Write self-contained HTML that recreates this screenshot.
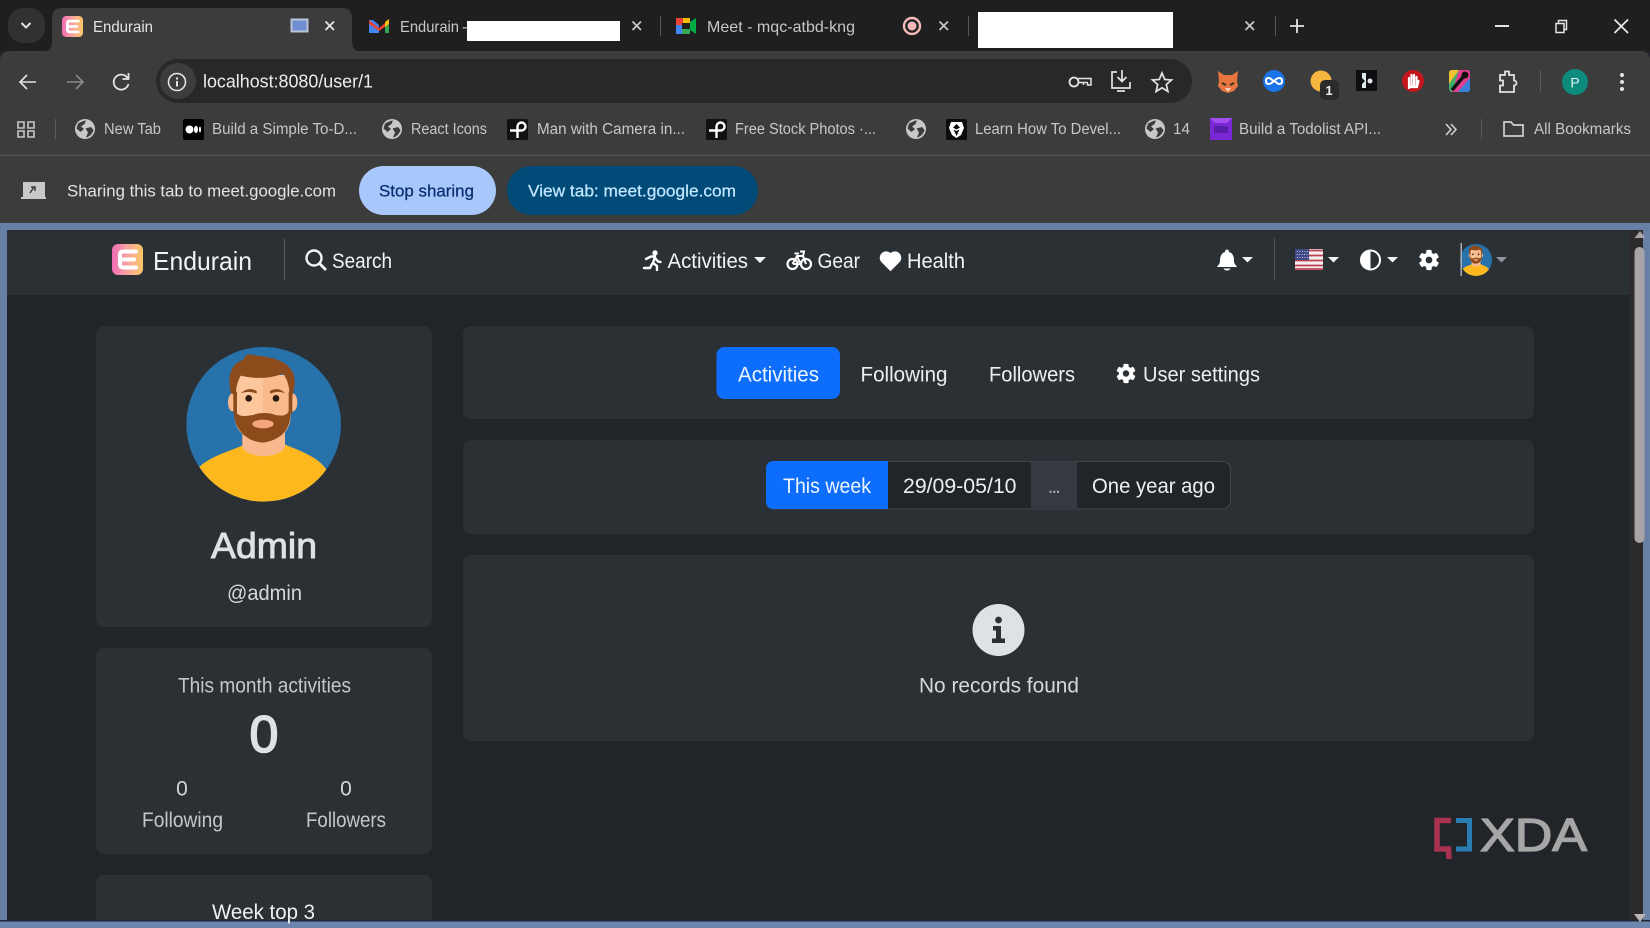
<!DOCTYPE html>
<html lang="en"><head><meta charset="utf-8"><title>Endurain</title>
<style>
html,body{margin:0;padding:0;width:1650px;height:928px;overflow:hidden;background:#212529}
svg{display:block}
text{font-family:"Liberation Sans",sans-serif}
</style></head><body>
<svg width="1650" height="928" viewBox="0 0 1650 928" xmlns="http://www.w3.org/2000/svg">
<defs>
<linearGradient id="eg" x1="0" y1="0" x2="1" y2="0"><stop offset="0" stop-color="#f06cb4"/><stop offset=".5" stop-color="#f8a5a0"/><stop offset="1" stop-color="#fdc665"/></linearGradient>
<symbol id="logo" viewBox="0 0 31 31"><rect width="31" height="31" rx="6" fill="url(#eg)"/><path d="M24 7.500H11.500Q8 7.500 8 11V20Q8 23.500 11.500 23.500H24M9 15.500H22" fill="none" stroke="#fff" stroke-width="4" stroke-linecap="round"/></symbol>
<symbol id="globe" viewBox="0 0 20 20"><circle cx="10" cy="10" r="10" fill="#c8c8c8"/><path d="M3 4.500C6 3 9 1.500 11 1.500L9.500 5L6 7.500L9 10L5.500 13L1.500 9.500ZM16 8L10.500 9.500L13 13.500L11 18.500C14 18 17.500 15 18.500 11Z" fill="#3c3c3c"/></symbol>
<symbol id="pexels" viewBox="0 0 21 21"><rect width="21" height="21" rx="2" fill="#111"/><path d="M3 11.500H14.500A4 4 0 1 0 10.500 7.500V19" fill="none" stroke="#fff" stroke-width="2.400"/></symbol>
<symbol id="gear" viewBox="-12 -12 24 24"><g fill="currentColor"><rect x="-3" y="-11" width="6" height="22" rx="1.500"/><rect x="-3" y="-11" width="6" height="22" rx="1.500" transform="rotate(60)"/><rect x="-3" y="-11" width="6" height="22" rx="1.500" transform="rotate(120)"/><circle r="8.200"/></g><circle r="3.700" fill="#2b3035"/></symbol>
<clipPath id="avclip"><circle cx="791" cy="598" r="232"/></clipPath>
<g id="avatar">
<circle cx="791" cy="598" r="232" fill="#2872ac"/>
<g clip-path="url(#avclip)">
<path d="M596 728C625 695 700 675 742 655H848C890 675 955 692 982 738V840H596Z" fill="#fdb81e"/>
<path d="M727 610V668C750 702 832 702 855 668V610Z" fill="#f9b88e"/>
<ellipse cx="698" cy="532" rx="14" ry="27" fill="#f9b88e"/><ellipse cx="878" cy="532" rx="14" ry="27" fill="#f9b88e"/>
<path d="M704 450H872V570C872 620 840 645 788 645C736 645 704 620 704 570Z" fill="#fcc79d"/>
<path d="M788 450H872V570C872 620 840 645 788 645Z" fill="#f9bb8d"/>
<path d="M693 505C680 450 695 415 730 405C735 390 745 385 760 390C800 395 860 400 880 445C888 470 882 490 878 510L868 505C868 480 860 462 850 445C810 462 760 462 722 452C712 470 708 490 707 510Z" fill="#8d4a1a"/>
<path d="M700 500H711V565H700ZM866 500H877V565H866Z" fill="#8d4a1a"/>
<path d="M703 550C712 582 740 572 760 570C775 562 810 562 825 570C845 572 862 578 871 548C876 595 860 642 790 653C730 650 696 600 703 550Z" fill="#8d4a1a"/>
<ellipse cx="789" cy="597" rx="32" ry="13" fill="#f4a77e"/>
<path d="M722 505Q745 484 770 498V506Q745 496 722 505ZM810 498Q835 484 856 505Q835 496 810 506Z" fill="#8d4a1a"/>
<circle cx="746" cy="520" r="10" fill="#2c1a10"/><circle cx="828" cy="520" r="10" fill="#2c1a10"/>
</g></g>
</defs>

<!-- tab strip -->
<rect width="1650" height="52" fill="#1f1f1f"/>
<rect x="8" y="8" width="37" height="35" rx="15" fill="#303133"/>
<path d="M21.500 23L26 27.500L30.500 23" fill="none" stroke="#e3e3e3" stroke-width="2"/>
<path d="M42 52Q52 52 52 41V18Q52 8 62 8H342Q352 8 352 18V41Q352 52 362 52Z" fill="#3c3c3c"/>
<use href="#logo" x="62" y="16" width="21" height="21"/>
<text x="93" y="32" font-size="16" fill="#e3e3e3" textLength="60" lengthAdjust="spacingAndGlyphs">Endurain</text>
<rect x="291.500" y="19.500" width="16" height="12" fill="#6f8fd0" stroke="#b9c4d8" stroke-width="2"/>
<path d="M325.500 21.500L334 30M334 21.500L325.500 30" stroke="#e8e8e8" stroke-width="1.800"/>
<!-- gmail -->
<path d="M369 33V20L373 20L379 25V33" fill="#4285f4"/><path d="M385 33V22L389 20V33Z" fill="#34a853"/><path d="M369 20L379 28L389 20V24L379 31L369 24Z" fill="#ea4335"/><path d="M385 22L389 19V24L385 27Z" fill="#fbbc04"/>
<text x="400" y="32" font-size="16" fill="#c7c7c7" textLength="59" lengthAdjust="spacingAndGlyphs">Endurain</text>
<text x="462" y="32" font-size="16" fill="#c7c7c7">-</text>
<rect x="467" y="21" width="153" height="20" fill="#fff"/>
<path d="M632.500 21.500L641 30M641 21.500L632.500 30" stroke="#c7c7c7" stroke-width="1.800"/>
<rect x="660" y="16" width="1" height="20" fill="#555"/>
<!-- meet -->
<rect x="676" y="18" width="7" height="7" fill="#ea4335"/><rect x="683" y="18" width="7" height="5" fill="#fbbc04"/><rect x="676" y="25" width="6" height="9" fill="#4285f4"/><rect x="682" y="29" width="8" height="5" fill="#34a853"/><path d="M690 22L696 18V34L690 30Z" fill="#00ac47"/><rect x="682" y="23" width="7" height="6" fill="#1f1f1f"/>
<text x="707" y="32" font-size="16" fill="#c7c7c7" textLength="148" lengthAdjust="spacingAndGlyphs">Meet - mqc-atbd-kng</text>
<circle cx="912" cy="26" r="8" fill="#1f1f1f" stroke="#f2b8b5" stroke-width="2.400"/><circle cx="912" cy="26" r="4.500" fill="#f2b8b5"/>
<path d="M939.500 21.500L948 30M948 21.500L939.500 30" stroke="#c7c7c7" stroke-width="1.800"/>
<rect x="968" y="16" width="1" height="20" fill="#555"/>
<rect x="978" y="12" width="195" height="36" fill="#fff"/>
<path d="M1245.500 21.500L1254 30M1254 21.500L1245.500 30" stroke="#c7c7c7" stroke-width="1.800"/>
<rect x="1275" y="16" width="1" height="20" fill="#555"/>
<path d="M1290 26H1304M1297 19V33" stroke="#e3e3e3" stroke-width="1.800"/>
<rect x="1495" y="25" width="14" height="2" fill="#e3e3e3"/>
<path d="M1556 23.500H1564V32.500H1556ZM1558.500 23.500V20.500H1566.500V29.500H1564" fill="none" stroke="#e3e3e3" stroke-width="1.500"/>
<path d="M1614.500 19.500L1628 33M1628 19.500L1614.500 33" stroke="#e8e8e8" stroke-width="1.800"/>

<!-- toolbar and infobar -->
<path d="M0 223V61Q0 51 10 51H1640Q1650 51 1650 61V223Z" fill="#3c3c3c"/>
<path d="M36 82H20M27 75L20 82L27 89" fill="none" stroke="#e3e3e3" stroke-width="1.600"/>
<path d="M83 82H67M76 75L83 82L76 89" fill="none" stroke="#8a8a8a" stroke-width="1.600"/>
<path d="M127.500 78A7.500 7.500 0 1 0 128.500 84M128.500 73V79H122.500" fill="none" stroke="#e3e3e3" stroke-width="1.800"/>
<rect x="156" y="59" width="1036" height="44" rx="22" fill="#282828"/>
<circle cx="178" cy="81" r="18" fill="#3d3d3d"/>
<circle cx="177" cy="82" r="8.500" fill="none" stroke="#e3e3e3" stroke-width="1.600"/><rect x="176" y="81" width="2" height="5.500" fill="#e3e3e3"/><rect x="176" y="77.500" width="2" height="2" fill="#e3e3e3"/>
<text x="203" y="87.500" font-size="18" fill="#ececec" textLength="170" lengthAdjust="spacingAndGlyphs">localhost:8080/user/1</text>
<!-- key -->
<circle cx="1074" cy="82" r="4.500" fill="none" stroke="#e3e3e3" stroke-width="1.800"/><path d="M1078 78.500H1091V85H1087.500V82.500M1083.500 85V82.500M1078 82.500H1088" fill="none" stroke="#e3e3e3" stroke-width="1.500"/>
<!-- install -->
<path d="M1117 72H1112V88H1130V82M1122 70V81M1117.500 77L1122 81.500L1126.500 77M1117 91H1125" fill="none" stroke="#e3e3e3" stroke-width="1.700"/>
<!-- star -->
<path d="M1162 73L1164.700 79.500L1171.500 80L1166.300 84.500L1167.900 91.500L1162 87.800L1156.100 91.500L1157.700 84.500L1152.500 80L1159.300 79.500Z" fill="none" stroke="#e3e3e3" stroke-width="1.700"/>
<!-- extensions -->
<path d="M1218 71L1224 75H1232L1238 71L1237 81L1238 86L1234 91L1228 93L1222 91L1218 86L1219 81Z" fill="#e5763f"/><path d="M1222 83L1226 85M1234 83L1230 85" stroke="#3a2a20" stroke-width="2"/><path d="M1225 88H1231L1228 92Z" fill="#f5d0b5"/>
<circle cx="1274" cy="81" r="11" fill="#1a73e8"/><path d="M1273 81C1270 77 1266 77 1266 81C1266 85 1270 85 1274 81C1278 77 1282 77 1282 81C1282 85 1278 85 1275 81" fill="none" stroke="#fff" stroke-width="2"/>
<circle cx="1321" cy="81" r="10.500" fill="#f4b63f"/>
<rect x="1320" y="80" width="19" height="20" rx="5" fill="#2a2a2a"/><text x="1329" y="95" font-size="13" font-weight="700" fill="#eee" text-anchor="middle">1</text>
<rect x="1356" y="70" width="21" height="21" fill="#0d0d12"/><path d="M1362 73V78L1365 81L1362 84V88H1366V73Z" fill="#dfe7ee"/><circle cx="1370" cy="81" r="2.500" fill="#dfe7ee"/>
<circle cx="1413" cy="81" r="11" fill="#c4161c"/><path d="M1409 88V78M1411.500 86V75M1414 86V75M1416.500 86V77M1409 87H1417L1418.500 81" fill="none" stroke="#fff" stroke-width="2.200" stroke-linecap="round"/>
<rect x="1449" y="70" width="21" height="22" rx="3" fill="#3fae6a"/><path d="M1449 73Q1449 70 1452 70H1459L1449 84Z" fill="#f2c230"/><path d="M1459 70H1467Q1470 70 1470 73V78L1458 92H1452Z" fill="#e33f8f"/><path d="M1470 78V89Q1470 92 1467 92H1458Z" fill="#3a7fe0"/><path d="M1452 90L1464 76" stroke="#111" stroke-width="3.500"/><circle cx="1465" cy="75" r="3.500" fill="#111"/>
<path d="M1500 75H1505V71.500H1509V75H1514V80.500A2.500 2.500 0 0 1 1514 85.500V92H1500V85.500H1503V80.500H1500Z" fill="none" stroke="#e3e3e3" stroke-width="1.800"/>
<rect x="1540" y="70" width="1" height="22" fill="#5c5c5c"/>
<circle cx="1575" cy="82" r="13" fill="#0d8b7d"/><text x="1575" y="87.500" font-size="14" fill="#e6f5f2" text-anchor="middle">P</text>
<circle cx="1622" cy="75" r="2" fill="#e3e3e3"/><circle cx="1622" cy="82" r="2" fill="#e3e3e3"/><circle cx="1622" cy="89" r="2" fill="#e3e3e3"/>

<!-- bookmarks -->
<path d="M18 122H24V128H18ZM28 122H34V128H28ZM18 131H24V137H18ZM28 131H34V137H28Z" fill="none" stroke="#c7c7c7" stroke-width="1.600"/>
<rect x="55" y="119" width="1" height="20" fill="#5c5c5c"/>
<use href="#globe" x="75" y="119" width="20" height="20"/>
<text x="104" y="134" font-size="15.500" fill="#c7c7c7" textLength="57" lengthAdjust="spacingAndGlyphs">New Tab</text>
<rect x="183" y="119" width="21" height="21" rx="2" fill="#000"/><circle cx="189.500" cy="129.500" r="4" fill="#fff"/><ellipse cx="196" cy="129.500" rx="2" ry="3.600" fill="#fff"/><ellipse cx="200" cy="129.500" rx="1" ry="3" fill="#fff"/>
<text x="212" y="134" font-size="15.500" fill="#c7c7c7" textLength="145" lengthAdjust="spacingAndGlyphs">Build a Simple To-D...</text>
<use href="#globe" x="382" y="119" width="20" height="20"/>
<text x="411" y="134" font-size="15.500" fill="#c7c7c7" textLength="76" lengthAdjust="spacingAndGlyphs">React Icons</text>
<use href="#pexels" x="507" y="119" width="21" height="21"/>
<text x="537" y="134" font-size="15.500" fill="#c7c7c7" textLength="148" lengthAdjust="spacingAndGlyphs">Man with Camera in...</text>
<use href="#pexels" x="706" y="119" width="21" height="21"/>
<text x="735" y="134" font-size="15.500" fill="#c7c7c7" textLength="141" lengthAdjust="spacingAndGlyphs">Free Stock Photos ·...</text>
<use href="#globe" x="906" y="119" width="20" height="20"/>
<rect x="946" y="119" width="21" height="21" rx="2" fill="#0c0c0c"/><path d="M951 122H962L964 128L961 135L956.500 138L952 135L949 128Z" fill="#fff"/><path d="M956.500 124V129.500L953 127.500ZM956.500 124L960 127.500L956.500 129.500ZM956.500 131V136L953.500 129.500ZM956.500 131L959.500 129.500L956.500 136Z" fill="#0c0c0c"/>
<text x="975" y="134" font-size="15.500" fill="#c7c7c7" textLength="146" lengthAdjust="spacingAndGlyphs">Learn How To Devel...</text>
<use href="#globe" x="1145" y="119" width="20" height="20"/>
<text x="1173" y="134" font-size="15.500" fill="#c7c7c7" textLength="17" lengthAdjust="spacingAndGlyphs">14</text>
<rect x="1210" y="118" width="22" height="22" fill="#7a27d6"/><rect x="1214" y="126" width="14" height="7" fill="#5a1fa8"/><path d="M1210 118L1215 123H1227L1232 118Z" fill="#a14df0"/>
<text x="1239" y="134" font-size="15.500" fill="#c7c7c7" textLength="142" lengthAdjust="spacingAndGlyphs">Build a Todolist API...</text>
<path d="M1446 124L1451 129.500L1446 135M1451 124L1456 129.500L1451 135" fill="none" stroke="#d0d0d0" stroke-width="1.600"/>
<rect x="1481" y="119" width="1" height="20" fill="#5c5c5c"/>
<path d="M1504 136V122H1511L1513.500 125H1523V136Z" fill="none" stroke="#d0d0d0" stroke-width="1.700"/>
<text x="1534" y="134" font-size="15.500" fill="#c7c7c7" textLength="97" lengthAdjust="spacingAndGlyphs">All Bookmarks</text>
<rect x="0" y="154.500" width="1650" height="1.500" fill="#525252"/>

<!-- infobar -->
<rect x="23" y="182" width="22" height="15" fill="#c8c8c8"/><rect x="21" y="197" width="25" height="2" fill="#c8c8c8"/><path d="M30 193L34 187M31 187H35V191" fill="none" stroke="#3c3c3c" stroke-width="1.500"/>
<text x="67" y="196.500" font-size="17" fill="#e3e3e3" textLength="269" lengthAdjust="spacingAndGlyphs">Sharing this tab to meet.google.com</text>
<rect x="359" y="166" width="137" height="49" rx="24.500" fill="#a8c7fa"/>
<text x="379" y="196.500" font-size="17" fill="#062e6f" textLength="95" lengthAdjust="spacingAndGlyphs" stroke="#062e6f" stroke-width=".25">Stop sharing</text>
<rect x="507" y="166" width="251" height="49" rx="24.500" fill="#004a77"/>
<text x="528" y="196.500" font-size="17" fill="#c2e7ff" textLength="208" lengthAdjust="spacingAndGlyphs" stroke="#c2e7ff" stroke-width=".25">View tab: meet.google.com</text>

<!-- page -->
<rect x="0" y="223" width="1650" height="705" fill="#6880a6"/>
<rect x="7" y="230" width="1636" height="690" fill="#212529"/>
<rect x="1630" y="230" width="13" height="690" fill="#2c2a2b"/>
<rect x="7" y="230" width="1623" height="65" fill="#2b3035"/>

<!-- navbar -->
<use href="#logo" x="112" y="244" width="31" height="31"/>
<text x="153" y="270" font-size="26" fill="#f2f3f4" textLength="99" lengthAdjust="spacingAndGlyphs">Endurain</text>
<rect x="284" y="239" width="1" height="41" fill="#5a5f64"/>
<circle cx="314" cy="258" r="7.500" fill="none" stroke="#f2f3f4" stroke-width="2.400"/><path d="M319.500 263.500L326 270" stroke="#f2f3f4" stroke-width="2.800"/>
<text x="332" y="268" font-size="21" fill="#f2f3f4" textLength="60" lengthAdjust="spacingAndGlyphs">Search</text>
<!-- runner -->
<circle cx="655" cy="253" r="2.700" fill="#fff"/><path d="M646 259L651 256.500H655L653 263L657 266V270M655 258L658 261.500L660.500 262M652 264L650 268H644" fill="none" stroke="#fff" stroke-width="2.400" stroke-linecap="round" stroke-linejoin="round"/>
<text x="667.500" y="268" font-size="21" fill="#f2f3f4" textLength="80.500" lengthAdjust="spacingAndGlyphs">Activities</text>
<path d="M754 257H766L760 263Z" fill="#f2f3f4"/>
<!-- bike -->
<circle cx="792.500" cy="264" r="5" fill="none" stroke="#fff" stroke-width="2.200"/><circle cx="806" cy="264" r="5" fill="none" stroke="#fff" stroke-width="2.200"/><path d="M792.500 264L797 256H803L806 264M797 256L800.500 264H793M800 251.500H804L803 256M794.500 253.500H799" fill="none" stroke="#fff" stroke-width="2"/>
<text x="817.500" y="268" font-size="21" fill="#f2f3f4" textLength="42.500" lengthAdjust="spacingAndGlyphs">Gear</text>
<path d="M890.500 270.500L881.800 261.800A5.900 5.900 0 0 1 890.500 253.800A5.900 5.900 0 0 1 899.200 261.800Z" fill="#fff" stroke="#fff" stroke-width="1"/>
<text x="907" y="268" font-size="21" fill="#f2f3f4" textLength="58" lengthAdjust="spacingAndGlyphs">Health</text>
<!-- bell -->
<path d="M1227 249.500C1229 249.500 1229 252 1229 252C1233 253 1234 257 1234 261C1234 264 1236 265 1237 267H1217C1218 265 1220 264 1220 261C1220 257 1221 253 1225 252C1225 252 1225 249.500 1227 249.500ZM1223.500 268.500H1230.500Q1229.500 270.500 1227 270.500Q1224.500 270.500 1223.500 268.500Z" fill="#fff"/>
<path d="M1242 257H1253L1247.500 262.500Z" fill="#f2f3f4"/>
<rect x="1274" y="238" width="1" height="42" fill="#4f5459"/>
<!-- flag -->
<rect x="1295" y="249" width="28" height="21" fill="#f4f0f0"/>
<path d="M1295 250.500H1323M1295 255.500H1323M1295 260.500H1323M1295 265.500H1323M1295 269H1323" stroke="#b9404f" stroke-width="1.700"/>
<rect x="1295" y="249" width="14" height="11" fill="#3f4a86"/>
<path d="M1297 251.500H1308M1296.500 254.500H1308M1297 257.500H1308" stroke="#c3c7dc" stroke-width="1" stroke-dasharray="1 1.500"/>
<path d="M1328 257H1339L1333.500 262.500Z" fill="#f2f3f4"/>
<!-- contrast -->
<circle cx="1370.500" cy="260" r="9.500" fill="#2b3035" stroke="#fff" stroke-width="2"/><path d="M1370.500 250.500A9.500 9.500 0 0 0 1370.500 269.500Z" fill="#fff"/>
<path d="M1387 257H1398L1392.500 262.500Z" fill="#f2f3f4"/>
<use href="#gear" x="1418" y="249" width="22" height="22" style="color:#fff"/>
<g transform="translate(1476 260) scale(.069) translate(-791 -598)"><use href="#avatar"/></g>
<rect x="1460.500" y="243" width="1.500" height="33" fill="#a9afb6"/>
<path d="M1496 257H1507L1501.500 262.500Z" fill="#8f959b"/>

<!-- left cards -->
<rect x="96" y="326" width="336" height="301" rx="8" fill="#2b3035"/>
<g transform="translate(0 225) scale(.33333)"><use href="#avatar"/></g>
<text x="211" y="558" font-size="36" fill="#dee2e6" stroke="#dee2e6" stroke-width=".9" textLength="106" lengthAdjust="spacingAndGlyphs">Admin</text>
<text x="227" y="600" font-size="21" fill="#d4d8dc" textLength="75" lengthAdjust="spacingAndGlyphs">@admin</text>

<rect x="96" y="648" width="336" height="206" rx="8" fill="#2b3035"/>
<text x="178" y="692.500" font-size="21" fill="#c3c7cb" textLength="173" lengthAdjust="spacingAndGlyphs">This month activities</text>
<text x="264" y="752" font-size="52" fill="#dee2e6" stroke="#dee2e6" stroke-width="1.600" text-anchor="middle">0</text>
<text x="182" y="795.500" font-size="21" fill="#d4d8dc" text-anchor="middle">0</text>
<text x="346" y="795.500" font-size="21" fill="#d4d8dc" text-anchor="middle">0</text>
<text x="142" y="827" font-size="21" fill="#c3c7cb" textLength="81" lengthAdjust="spacingAndGlyphs">Following</text>
<text x="306" y="827" font-size="21" fill="#c3c7cb" textLength="80" lengthAdjust="spacingAndGlyphs">Followers</text>

<rect x="96" y="875" width="336" height="53" rx="8" fill="#2b3035"/>

<!-- right cards -->
<rect x="463" y="326" width="1071" height="93" rx="8" fill="#2b3035"/>
<rect x="716.500" y="347" width="123.500" height="52" rx="8" fill="#0d6efd"/>
<text x="738" y="381.500" font-size="21" fill="#f0f6ff" textLength="81" lengthAdjust="spacingAndGlyphs">Activities</text>
<text x="860.500" y="381.500" font-size="21" fill="#eceeef" textLength="87" lengthAdjust="spacingAndGlyphs">Following</text>
<text x="989" y="381.500" font-size="21" fill="#eceeef" textLength="86" lengthAdjust="spacingAndGlyphs">Followers</text>
<use href="#gear" x="1115.500" y="363" width="21" height="21" style="color:#fff"/>
<text x="1143" y="381.500" font-size="21" fill="#eceeef" textLength="117" lengthAdjust="spacingAndGlyphs">User settings</text>

<rect x="463" y="440" width="1071" height="94" rx="8" fill="#2b3035"/>
<rect x="766.500" y="461.500" width="464" height="47.500" rx="8" fill="#212529" stroke="#41464b" stroke-width="1"/>
<rect x="1031" y="461.500" width="46" height="47.500" fill="#343a40"/>
<path d="M888 461H774Q766 461 766 469V501Q766 509 774 509H888Z" fill="#0d6efd"/>
<text x="783" y="493" font-size="21.500" fill="#eef5ff" textLength="88" lengthAdjust="spacingAndGlyphs">This week</text>
<text x="903" y="493" font-size="21.500" fill="#eceeef" textLength="113.500" lengthAdjust="spacingAndGlyphs">29/09-05/10</text>
<text x="1047.500" y="493" font-size="21" fill="#a6aaaf" textLength="13.500" lengthAdjust="spacing">...</text>
<text x="1092" y="493" font-size="21.500" fill="#eceeef" textLength="123" lengthAdjust="spacingAndGlyphs">One year ago</text>

<rect x="463" y="555" width="1071" height="186" rx="8" fill="#2b3035"/>
<ellipse cx="998.500" cy="630" rx="26" ry="26" fill="#dee2e6"/>
<circle cx="998.500" cy="620" r="3.400" fill="#2b3035"/>
<path d="M993 626H1001V638.500H1005V643H992V638.500H996V630.500H993Z" fill="#2b3035"/>
<text x="919" y="692.500" font-size="21.500" fill="#d4d8dc" textLength="160" lengthAdjust="spacingAndGlyphs">No records found</text>

<!-- XDA -->
<path d="M1451 820.500H1437V849H1448.500L1449 859" fill="none" stroke="#a8324f" stroke-width="5.500"/>
<path d="M1456 820.500H1469.500V849H1456" fill="none" stroke="#2a7db0" stroke-width="5"/>
<text x="1480" y="851" font-size="46" fill="#a6a6a6" stroke="#a6a6a6" stroke-width="1.300" textLength="107" lengthAdjust="spacingAndGlyphs">XDA</text>

<!-- scrollbar -->
<rect x="1634.500" y="247" width="10" height="296" rx="5" fill="#a9a4a6"/>
<path d="M1634.500 238L1640 231L1645.500 238Z" fill="#a9a4a6"/>
<!-- bottom border -->
<rect x="0" y="920" width="1650" height="8" fill="#6d86ad"/>
<rect x="0" y="920" width="1650" height="1.500" fill="#1c2a3a"/>
<path d="M1634 914H1646L1640 922Z" fill="#b9b5b7"/>
<text x="212" y="919" font-size="21" fill="#eef0f1" textLength="103" lengthAdjust="spacingAndGlyphs">Week top 3</text>
</svg>
</body></html>
